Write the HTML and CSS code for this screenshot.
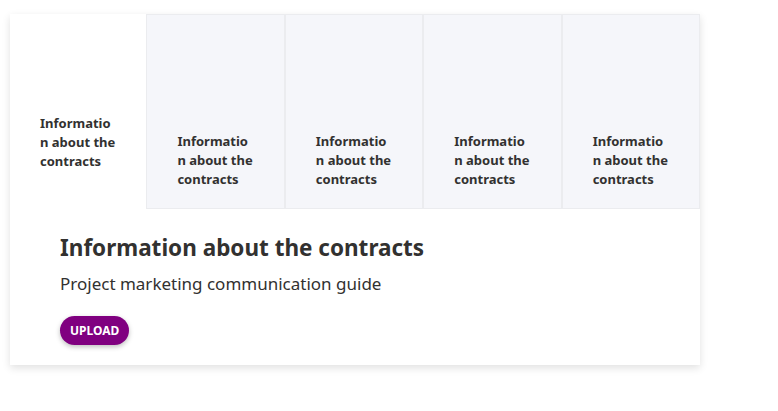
FILE: index.html
```html
<!DOCTYPE html>
<html>
  <head>
    <meta charset="utf-8"/>
    <link rel="stylesheet" href="styles.css">
  </head>
  <body>
    <div class="card">
      <div class="tabs">
        <div class="tab active"><span class="tab-text">Information about the contracts</span></div>
        <div class="tab"><span class="tab-text">Information about the contracts</span></div>
        <div class="tab"><span class="tab-text">Information about the contracts</span></div>
        <div class="tab"><span class="tab-text">Information about the contracts</span></div>
        <div class="tab"><span class="tab-text">Information about the contracts</span></div>
      </div>
      <div class="content">
        <h2 class="title">Information about the contracts</h2>
        <p class="subtitle">Project marketing communication guide</p>
        <button class="btn-upload">UPLOAD</button>
      </div>
    </div>
  </body>
</html>
```

FILE: styles.css
```css
html, body {
  margin: 0;
  padding: 0;
  background-color: #fff;
}
body {
  padding: 14px 10px;
  font-family: "Noto Sans", "Open Sans", sans-serif;
  color: #323130;
}
.card {
  width: 690px;
  background-color: #fff;
  box-shadow: 0 3px 8px rgba(0, 0, 0, 0.12);
}
.tabs {
  display: flex;
  height: 195px;
}
.tab {
  flex: 1 1 0;
  display: flex;
  align-items: flex-end;
  padding: 0 20px 19px 30px;
  background-color: #f5f6fa;
  border: 1px solid #ebecef;
}
.tab.active {
  background-color: #fff;
  border: 0;
  padding-bottom: 38px;
}
.tab-text {
  display: block;
  width: 78px;
  word-break: break-all;
  font-size: 13px;
  font-weight: bold;
  line-height: 19px;
  color: #323130;
}
.content {
  padding: 24px 50px 20px 50px;
}
.title {
  margin: 0;
  font-size: 22.5px;
  font-weight: bold;
  line-height: 30px;
  color: #323130;
}
.subtitle {
  margin: 10px 0 21px 0;
  font-size: 17px;
  line-height: 22px;
}
.btn-upload {
  display: block;
  height: 29px;
  padding: 0 10px;
  border: 0;
  border-radius: 15px;
  background-color: #800080;
  color: #fff;
  font-family: "Noto Sans", sans-serif;
  font-size: 12px;
  font-weight: bold;
  box-shadow: 0 2px 5px rgba(0, 0, 0, 0.25);
}
```
